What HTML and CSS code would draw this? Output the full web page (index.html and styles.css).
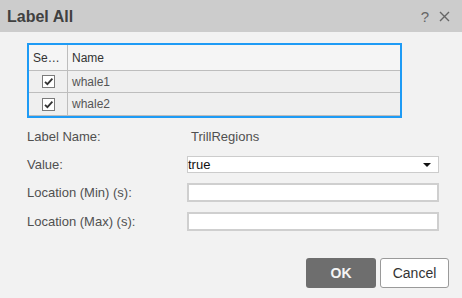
FILE: index.html
```html
<!DOCTYPE html>
<html>
<head>
<meta charset="utf-8">
<link rel="stylesheet" href="styles.css">
</head>
<body>
<div class="dialog">
  <div class="titlebar">
    <span class="title">Label All</span>
    <span class="tools"><span class="help">?</span><svg class="close" width="11" height="11" viewBox="0 0 11 11"><path d="M1 1 L10 10 M10 1 L1 10" stroke="#666" stroke-width="1.4" fill="none"/></svg></span>
  </div>
  <div class="content">
    <div class="table">
      <div class="row head">
        <div class="cell c1">Se…</div>
        <div class="cell c2">Name</div>
      </div>
      <div class="row">
        <div class="cell c1 center"><span class="check"><svg width="11" height="11" viewBox="0 0 11 11"><path d="M2 5.8 L4.4 8.2 L9.4 2.6" stroke="#333" stroke-width="1.8" fill="none"/></svg></span></div>
        <div class="cell c2">whale1</div>
      </div>
      <div class="row last">
        <div class="cell c1 center"><span class="check"><svg width="11" height="11" viewBox="0 0 11 11"><path d="M2 5.8 L4.4 8.2 L9.4 2.6" stroke="#333" stroke-width="1.8" fill="none"/></svg></span></div>
        <div class="cell c2">whale2</div>
      </div>
    </div>
    <div class="form">
      <div class="label r1">Label Name:</div>
      <div class="value r1">TrillRegions</div>
      <div class="label r2">Value:</div>
      <div class="select r2"><span>true</span><span class="arrow"></span></div>
      <div class="label r3">Location (Min) (s):</div>
      <div class="input r3"></div>
      <div class="label r4">Location (Max) (s):</div>
      <div class="input r4"></div>
    </div>
  </div>
  <div class="buttons">
    <div class="btn ok">OK</div>
    <div class="btn cancel">Cancel</div>
  </div>
</div>
</body>
</html>
```
FILE: styles.css
```css
html, body {
  margin: 0;
  padding: 0;
}
body {
  font-family: "Liberation Sans", Arial, sans-serif;
  background: #f2f2f2;
}
.dialog {
  width: 462px;
  height: 298px;
  background: #f2f2f2;
  display: flex;
  flex-direction: column;
}
.titlebar {
  height: 32px;
  background: #cccccc;
  display: flex;
  align-items: center;
  justify-content: space-between;
  padding: 0 12px 0 7px;
  box-sizing: border-box;
}
.title {
  font-size: 16px;
  font-weight: bold;
  color: #404040;
  margin-top: 1px;
}
.tools {
  display: flex;
  align-items: center;
  gap: 10px;
  color: #666;
}
.help {
  font-size: 15px;
  color: #666;
}
.close {
  display: block;
  margin-top: 1px;
}
.content {
  padding: 11px 0 0 27px;
}
.table {
  width: 375px;
  border: 2px solid #1e9bf5;
  box-sizing: border-box;
  font-size: 12px;
}
.row {
  display: flex;
  height: 22px;
  background: #efefef;
  border-bottom: 1px solid #bdbdbd;
  box-sizing: border-box;
}
.row.head {
  height: 26px;
  background: #f5f5f5;
  color: #333;
}
.row.last {
  height: 23px;
}
.cell {
  display: flex;
  align-items: center;
  padding-left: 4px;
  color: #555;
}
.head .cell {
  color: #333;
}
.c1 {
  width: 39px;
  border-right: 1px solid #bdbdbd;
  box-sizing: border-box;
}
.c1.center {
  justify-content: center;
  padding-left: 0;
}
.check {
  width: 13px;
  height: 13px;
  border: 1px solid #7a7a7a;
  background: #fff;
  box-sizing: border-box;
  display: flex;
  align-items: center;
  justify-content: center;
}
.check svg {
  display: block;
}
.form {
  margin-top: 8px;
  display: grid;
  grid-template-columns: 160px 252px;
  row-gap: 10px;
  font-size: 13px;
  color: #505050;
}
.label, .value {
  display: flex;
  align-items: center;
}
.r1 { height: 20px; }
.value {
  padding-left: 4px;
  color: #505050;
}
.select {
  height: 17px;
  background: #fff;
  border: 1px solid #cccccc;
  box-sizing: border-box;
  display: flex;
  align-items: center;
  justify-content: space-between;
  padding: 0 7px 0 0;
  color: #111;
  font-size: 13px;
}
.arrow {
  width: 0;
  height: 0;
  border-left: 4px solid transparent;
  border-right: 4px solid transparent;
  border-top: 4px solid #111;
}
.input {
  height: 19px;
  background: #fff;
  border: 2px solid #cfcfcf;
  box-sizing: border-box;
}
.buttons {
  margin-top: auto;
  display: flex;
  justify-content: flex-end;
  gap: 4px;
  padding: 0 13px 10px 0;
}
.btn {
  width: 70px;
  height: 30px;
  box-sizing: border-box;
  border-radius: 3px;
  display: flex;
  align-items: center;
  justify-content: center;
  font-size: 14px;
}
.ok {
  background: #6e6e6e;
  color: #f5f5f5;
  font-weight: bold;
}
.cancel {
  width: 69px;
  background: #fff;
  border: 1px solid #9a9a9a;
  color: #333;
}
```
